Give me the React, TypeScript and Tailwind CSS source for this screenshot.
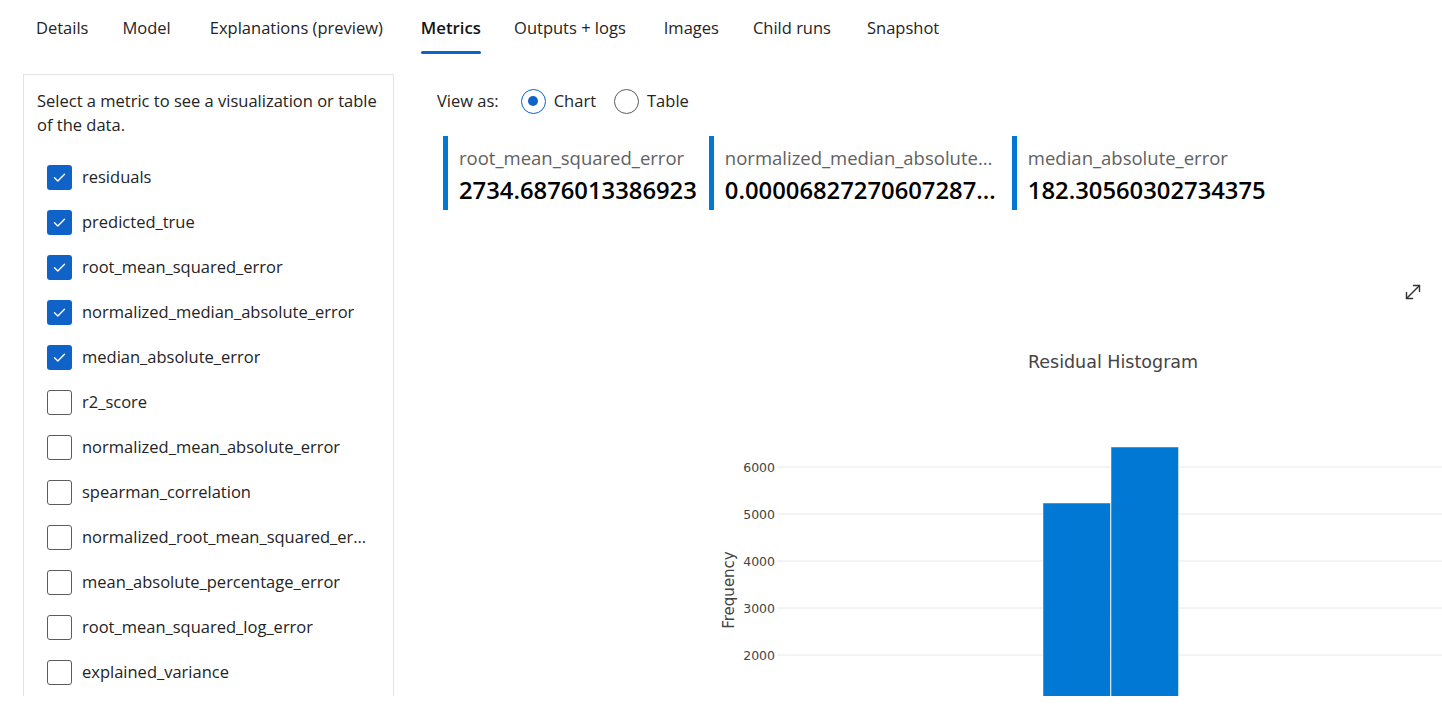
import React from "react";

const tabs = [
  { label: "Details", ml: "" },
  { label: "Model", ml: "" },
  { label: "Explanations (preview)", ml: "ml-[5px]" },
  { label: "Metrics", ml: "ml-[4px]" },
  { label: "Outputs + logs", ml: "ml-[-1px]" },
  { label: "Images", ml: "ml-[4px]" },
  { label: "Child runs", ml: "" },
  { label: "Snapshot", ml: "ml-[2px]" },
];

const metrics = [
  { name: "residuals", checked: true },
  { name: "predicted_true", checked: true },
  { name: "root_mean_squared_error", checked: true },
  { name: "normalized_median_absolute_error", checked: true },
  { name: "median_absolute_error", checked: true },
  { name: "r2_score", checked: false },
  { name: "normalized_mean_absolute_error", checked: false },
  { name: "spearman_correlation", checked: false },
  { name: "normalized_root_mean_squared_error", checked: false },
  { name: "mean_absolute_percentage_error", checked: false },
  { name: "root_mean_squared_log_error", checked: false },
  { name: "explained_variance", checked: false },
];

const cards = [
  { title: "root_mean_squared_error", value: "2734.6876013386923" },
  { title: "normalized_median_absolute_error", value: "0.00006827270607287123" },
  { title: "median_absolute_error", value: "182.30560302734375" },
];

// y positions for the histogram gridlines (svg coords)
const ticks = [
  { label: "6000", y: 257 },
  { label: "5000", y: 304 },
  { label: "4000", y: 351 },
  { label: "3000", y: 398 },
  { label: "2000", y: 445 },
];

function Checkbox({ checked }: { checked: boolean }) {
  if (checked) {
    return (
      <div className="flex h-[25px] w-[25px] shrink-0 items-center justify-center rounded-[3px] bg-[#0f62c8]">
        <svg width="15" height="15" viewBox="0 0 15 15" fill="none">
          <path d="M2.5 7.8 L5.8 11 L12.5 4.2" stroke="white" strokeWidth="1.4" strokeLinecap="round" strokeLinejoin="round" />
        </svg>
      </div>
    );
  }
  return <div className="h-[25px] w-[25px] shrink-0 rounded-[3px] border border-[#5c5c5c] bg-white" />;
}

function Radio({ checked }: { checked: boolean }) {
  return (
    <div
      className={
        checked
          ? "flex h-[25px] w-[25px] items-center justify-center rounded-full border border-[#0f62c8]"
          : "h-[25px] w-[25px] rounded-full border border-[#5c5c5c]"
      }
    >
      {checked && <div className="h-[10px] w-[10px] rounded-full bg-[#0f62c8]" />}
    </div>
  );
}

function Histogram() {
  return (
    <svg width="1027" height="486" className="block" style={{ fontFamily: "'DejaVu Sans', Verdana, sans-serif" }}>
      <text x="698" y="158" textAnchor="middle" fontSize="17.5" fill="#444">
        Residual Histogram
      </text>
      {ticks.map((t) => (
        <g key={t.label}>
          <line x1="362" x2="1027" y1={t.y} y2={t.y} stroke="#e8e8e8" strokeWidth="1" />
          <text x="360" y={t.y + 4.5} textAnchor="end" fontSize="12.5" fill="#444">
            {t.label}
          </text>
        </g>
      ))}
      <text x="319" y="380" textAnchor="middle" fontSize="15" fill="#444" transform="rotate(-90 319 380)">
        Frequency
      </text>
      <rect x="628" y="293" width="67.5" height="200" fill="#0078d4" stroke="#ffffff" strokeOpacity="0.6" strokeWidth="0.8" />
      <rect x="696" y="237" width="67.5" height="260" fill="#0078d4" stroke="#ffffff" strokeOpacity="0.6" strokeWidth="0.8" />
    </svg>
  );
}

export default function App() {
  return (
    <div
      className="h-[727px] w-[1442px] overflow-hidden bg-white text-[#242424]"
      style={{ fontFamily: "'Open Sans', 'Noto Sans', sans-serif" }}
    >
      {/* tab strip */}
      <div className="flex h-[56px] gap-[34px] pl-[36px] text-[16.5px]">
        {tabs.map((tab) => (
          <div key={tab.label} className={`flex flex-col pt-[16px] ${tab.ml}`}>
            <span
              className={
                tab.label === "Metrics"
                  ? "text-[16.8px] leading-[24px] font-semibold text-[#141414]"
                  : "leading-[24px]"
              }
            >
              {tab.label}
            </span>
            <div className={tab.label === "Metrics" ? "mt-[11px] h-[3px] rounded-full bg-[#0f62c8]" : "mt-[11px] h-[3px]"} />
          </div>
        ))}
      </div>

      <div className="mt-[18px] flex h-[622px] overflow-hidden">
        {/* metric picker */}
        <div className="ml-[23px] min-h-[700px] w-[371px] shrink-0 border border-[#e3e3e3] px-[13px] pt-[14px]">
          <p className="text-[16.5px] leading-[24px]">Select a metric to see a visualization or table of the data.</p>
          <div className="mt-[18px] flex flex-col pl-[10px]">
            {metrics.map((m) => (
              <div key={m.name} className="flex h-[45px] items-center gap-[10px]">
                <Checkbox checked={m.checked} />
                <span className="max-w-[287px] truncate text-[16.5px]">{m.name}</span>
              </div>
            ))}
          </div>
        </div>

        {/* chart area */}
        <div className="ml-[21px] flex w-[1027px] shrink-0 flex-col pt-[14px]">
          <div className="flex h-[26px] items-center pl-[22px] text-[16.5px]">
            <span>View as:</span>
            <div className="ml-[22px] flex items-center gap-[8px]">
              <Radio checked />
              <span>Chart</span>
            </div>
            <div className="ml-[18px] flex items-center gap-[8px]">
              <Radio checked={false} />
              <span>Table</span>
            </div>
          </div>

          <div className="mt-[22px] flex gap-[12px] pl-[28px]">
            {cards.map((c) => (
              <div key={c.title} className="flex h-[74px]">
                <div className="w-[5px] bg-[#0078d4]" />
                <div className="max-w-[286px] pl-[11px] pt-[9px]">
                  <div className="truncate text-[18.5px] leading-[26px] text-[#616161]">{c.title}</div>
                  <div className="mt-[4px] truncate text-[23.8px] font-semibold leading-[30px] text-black">{c.value}</div>
                </div>
              </div>
            ))}
          </div>

          <div className="relative">
            <Histogram />
            <button className="absolute left-[987px] top-[71px] flex h-[22px] w-[22px] items-center justify-center">
              <svg width="20" height="20" viewBox="0 0 20 20" fill="none" stroke="#333" strokeWidth="1.4" strokeLinecap="round" strokeLinejoin="round">
                <path d="M3.5 16.5 L16.5 3.5" />
                <path d="M10.5 3.5 H16.5 V9.5" />
                <path d="M3.5 10.5 V16.5 H9.5" />
              </svg>
            </button>
          </div>
        </div>
      </div>
    </div>
  );
}
